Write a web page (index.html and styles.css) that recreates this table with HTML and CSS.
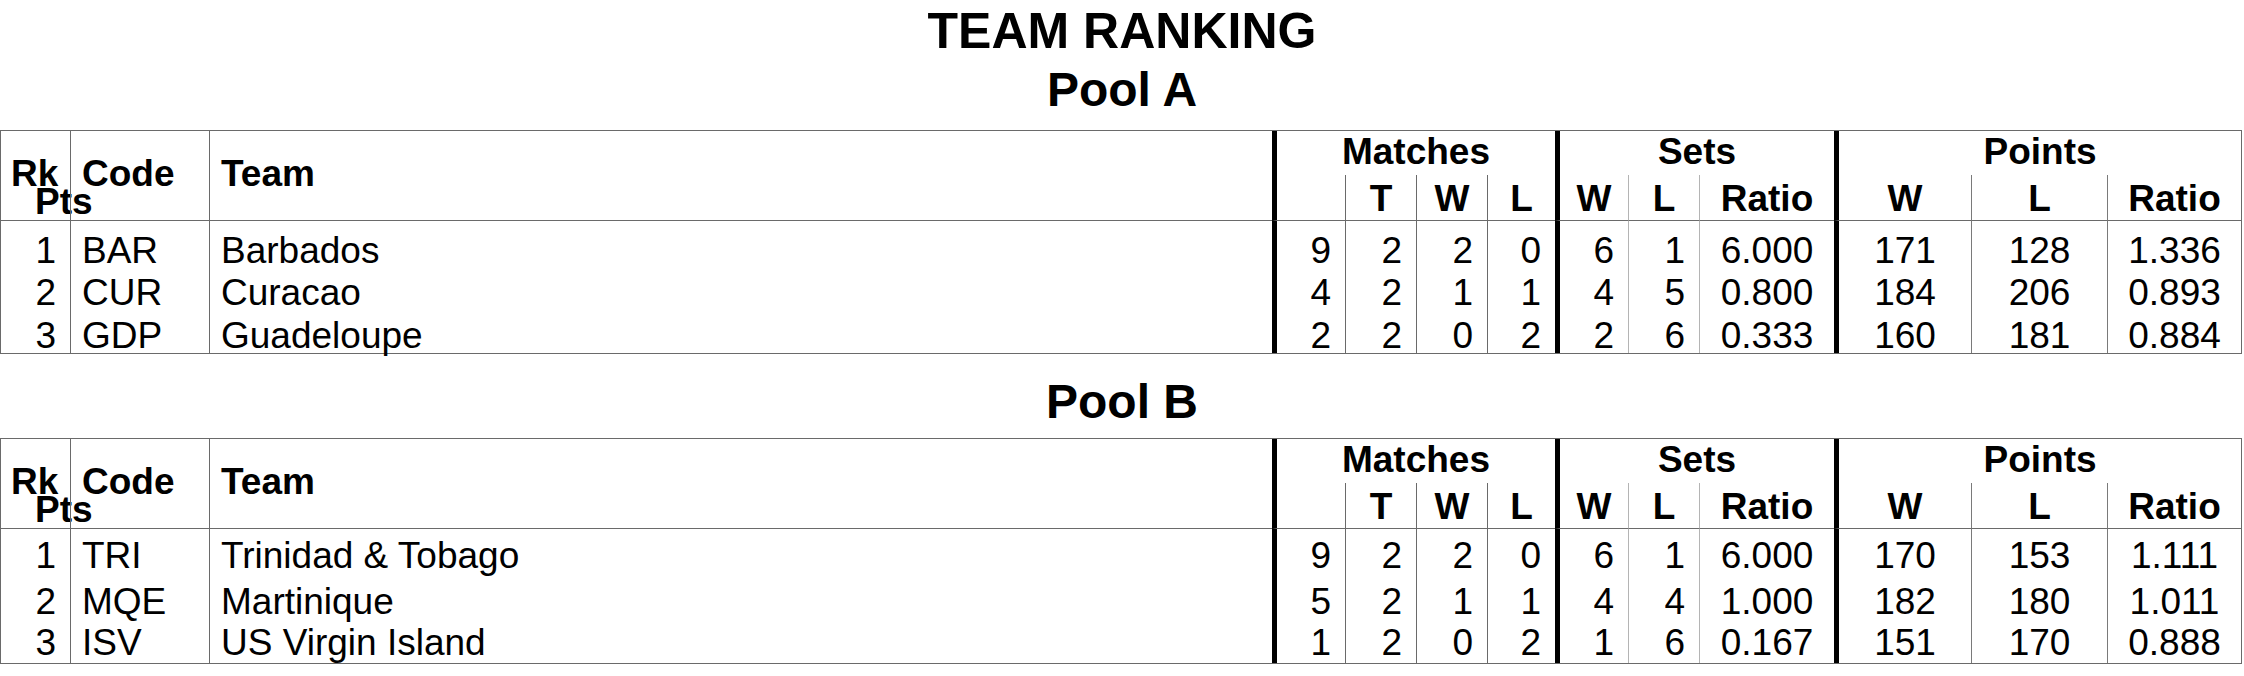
FILE: index.html
```html
<!DOCTYPE html>
<html lang="en">
<head>
<meta charset="utf-8">
<title>Team Ranking</title>
<link rel="stylesheet" href="styles.css">
</head>
<body>
<h1 class="title">TEAM RANKING</h1>

<h2 class="pool-title pool-title-a">Pool A</h2>
<div class="ranking pool-a">
  <div class="hd hd-left bl0 l pad-rk">Rk<span class="pts-label">Pts</span></div>
  <div class="hd hd-left bl l pad-l">Code</div>
  <div class="hd hd-left bl l pad-l">Team</div>
  <div class="hd grp bt c span-m">Matches</div>
  <div class="hd grp bt c span-s">Sets</div>
  <div class="hd grp bt c span-p">Points</div>
  <div class="hd sub bt c"></div>
  <div class="hd sub bl c">T</div>
  <div class="hd sub bl c">W</div>
  <div class="hd sub bl c">L</div>
  <div class="hd sub bt c">W</div>
  <div class="hd sub bs c">L</div>
  <div class="hd sub bs c">Ratio</div>
  <div class="hd sub bt c">W</div>
  <div class="hd sub bp c">L</div>
  <div class="hd sub bp c">Ratio</div>

  <div class="row first">
    <div class="r">1</div><div class="bl l pad-l">BAR</div><div class="bl l pad-l">Barbados</div>
    <div class="bt r">9</div><div class="bl r">2</div><div class="bl r">2</div><div class="bl r">0</div>
    <div class="bt r">6</div><div class="bs r">1</div><div class="bs c">6.000</div>
    <div class="bt c">171</div><div class="bp c">128</div><div class="bp c">1.336</div>
  </div>
  <div class="row">
    <div class="r">2</div><div class="bl l pad-l">CUR</div><div class="bl l pad-l">Curacao</div>
    <div class="bt r">4</div><div class="bl r">2</div><div class="bl r">1</div><div class="bl r">1</div>
    <div class="bt r">4</div><div class="bs r">5</div><div class="bs c">0.800</div>
    <div class="bt c">184</div><div class="bp c">206</div><div class="bp c">0.893</div>
  </div>
  <div class="row">
    <div class="r">3</div><div class="bl l pad-l">GDP</div><div class="bl l pad-l">Guadeloupe</div>
    <div class="bt r">2</div><div class="bl r">2</div><div class="bl r">0</div><div class="bl r">2</div>
    <div class="bt r">2</div><div class="bs r">6</div><div class="bs c">0.333</div>
    <div class="bt c">160</div><div class="bp c">181</div><div class="bp c">0.884</div>
  </div>
</div>

<h2 class="pool-title pool-title-b">Pool B</h2>
<div class="ranking pool-b">
  <div class="hd hd-left bl0 l pad-rk">Rk<span class="pts-label">Pts</span></div>
  <div class="hd hd-left bl l pad-l">Code</div>
  <div class="hd hd-left bl l pad-l">Team</div>
  <div class="hd grp bt c span-m">Matches</div>
  <div class="hd grp bt c span-s">Sets</div>
  <div class="hd grp bt c span-p">Points</div>
  <div class="hd sub bt c"></div>
  <div class="hd sub bl c">T</div>
  <div class="hd sub bl c">W</div>
  <div class="hd sub bl c">L</div>
  <div class="hd sub bt c">W</div>
  <div class="hd sub bs c">L</div>
  <div class="hd sub bs c">Ratio</div>
  <div class="hd sub bt c">W</div>
  <div class="hd sub bp c">L</div>
  <div class="hd sub bp c">Ratio</div>

  <div class="row first">
    <div class="r">1</div><div class="bl l pad-l">TRI</div><div class="bl l pad-l">Trinidad &amp; Tobago</div>
    <div class="bt r">9</div><div class="bl r">2</div><div class="bl r">2</div><div class="bl r">0</div>
    <div class="bt r">6</div><div class="bs r">1</div><div class="bs c">6.000</div>
    <div class="bt c">170</div><div class="bp c">153</div><div class="bp c">1.111</div>
  </div>
  <div class="row">
    <div class="r">2</div><div class="bl l pad-l">MQE</div><div class="bl l pad-l">Martinique</div>
    <div class="bt r">5</div><div class="bl r">2</div><div class="bl r">1</div><div class="bl r">1</div>
    <div class="bt r">4</div><div class="bs r">4</div><div class="bs c">1.000</div>
    <div class="bt c">182</div><div class="bp c">180</div><div class="bp c">1.011</div>
  </div>
  <div class="row">
    <div class="r">3</div><div class="bl l pad-l">ISV</div><div class="bl l pad-l">US Virgin Island</div>
    <div class="bt r">1</div><div class="bl r">2</div><div class="bl r">0</div><div class="bl r">2</div>
    <div class="bt r">1</div><div class="bs r">6</div><div class="bs c">0.167</div>
    <div class="bt c">151</div><div class="bp c">170</div><div class="bp c">0.888</div>
  </div>
</div>
</body>
</html>
```

FILE: styles.css
```css
html, body {
  margin: 0;
  padding: 0;
  background: #fff;
  color: #000;
  font-family: "Liberation Sans", Arial, Helvetica, sans-serif;
}

.title,
.pool-title {
  margin: 0;
  font-weight: 700;
  text-align: center;
}

.title {
  font-size: 50px;
  line-height: 50px;
  padding-top: 6px;
}

.pool-title {
  font-size: 48px;
  line-height: 48px;
}

.pool-title-a {
  margin-top: 10px;
  margin-bottom: 16px;
}

.pool-title-b {
  margin-top: 24px;
  margin-bottom: 12px;
}

.ranking {
  display: grid;
  grid-template-columns: 69px 139px 1063px 73px 71px 71px 68px 73px 71px 135px 137px 136px 134px;
  width: 2240px;
  border: 1px solid #6a6a6a;
  font-size: 37px;
  line-height: 37px;
  overflow: visible;
}

.pool-a {
  grid-template-rows: 44px 46px 53px 43px 36px;
}

.pool-b {
  grid-template-rows: 44px 46px 54px 41px 39px;
}

.ranking > div,
.row > div {
  box-sizing: border-box;
  white-space: nowrap;
  min-width: 0;
}

.row {
  display: contents;
}

.pool-a .row.first > div {
  padding-top: 11px;
}

.pool-b .row.first > div {
  padding-top: 8px;
}

.hd {
  font-weight: 700;
}

.hd-left {
  grid-row: 1 / span 2;
  padding-top: 24px;
  border-bottom: 1px solid #6a6a6a;
  position: relative;
}

.grp {
  padding-top: 2px;
}

.sub {
  padding-top: 5px;
  border-bottom: 1px solid #6a6a6a;
}

.span-m { grid-column: 4 / span 4; }
.span-s { grid-column: 8 / span 3; }
.span-p { grid-column: 11 / span 3; }

.pts-label {
  position: absolute;
  left: 34px;
  top: 52px;
}

.bl { border-left: 1px solid #6a6a6a; }
.bs { border-left: 1px solid #b4b4b4; }
.bp { border-left: 1px solid #7a7a7a; }
.bt { border-left: 5px solid #000; }

.l { text-align: left; }
.r { text-align: right; padding-right: 14px; }
.c { text-align: center; }

.pad-l { padding-left: 11px; }
.pad-rk { padding-left: 10px; }
```
